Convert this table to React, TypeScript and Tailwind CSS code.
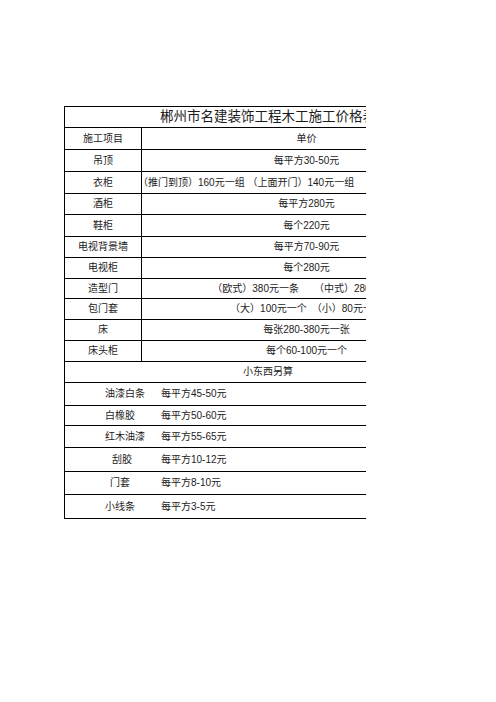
import React from "react";

const font = { fontFamily: '"Liberation Sans", "Noto Sans CJK SC", sans-serif' };

type Row = { name: string; price: string; h: string; left?: boolean };

const rows: Row[] = [
  { name: "吊顶", price: "每平方30-50元", h: "h-[22px]" },
  { name: "衣柜", price: "（推门到顶）160元一组 （上面开门）140元一组", h: "h-[22px]", left: true },
  { name: "酒柜", price: "每平方280元", h: "h-[21px]" },
  { name: "鞋柜", price: "每个220元", h: "h-[22px]" },
  { name: "电视背景墙", price: "每平方70-90元", h: "h-[21px]" },
  { name: "电视柜", price: "每个280元", h: "h-[21px]" },
  { name: "造型门", price: "（欧式）380元一条　　（中式）280元一条", h: "h-[20px]" },
  { name: "包门套", price: "（大）100元一个　（小）80元一个", h: "h-[21px]" },
  { name: "床", price: "每张280-380元一张", h: "h-[21px]" },
  { name: "床头柜", price: "每个60-100元一个", h: "h-[21px]" },
];

type Small = { name: string; price: string; h: string; pl: string };

const smalls: Small[] = [
  { name: "油漆白条", price: "每平方45-50元", h: "h-[23px]", pl: "pl-[40px]" },
  { name: "白橡胶", price: "每平方50-60元", h: "h-[20px]", pl: "pl-[40px]" },
  { name: "红木油漆", price: "每平方55-65元", h: "h-[22px]", pl: "pl-[40px]" },
  { name: "刮胶", price: "每平方10-12元", h: "h-[24px]", pl: "pl-[47px]" },
  { name: "门套", price: "每平方8-10元", h: "h-[23px]", pl: "pl-[45px]" },
  { name: "小线条", price: "每平方3-5元", h: "h-[24px]", pl: "pl-[40px]" },
];

export default function App() {
  return (
    <div className="w-[496px] h-[702px] bg-white pt-[106px] text-[#1c1c1c]" style={font}>
      <div className="ml-[64px] w-[302px] overflow-hidden">
        <div className="w-[407px] border-l border-t border-black text-[10px] leading-none">
          <div className="h-[21px] border-b border-black flex items-center justify-center text-[13.5px] whitespace-nowrap">
            郴州市名建装饰工程木工施工价格表
          </div>
          <div className="h-[22px] border-b border-black flex">
            <div className="w-[77px] shrink-0 border-r border-black flex items-center justify-center">施工项目</div>
            <div className="flex-1 flex items-center justify-center">单价</div>
          </div>
          {rows.map((r) => (
            <div key={r.name} className={`${r.h} border-b border-black flex`}>
              <div className="w-[77px] shrink-0 border-r border-black flex items-center justify-center whitespace-nowrap">
                {r.name}
              </div>
              <div
                className={`flex-1 flex items-center whitespace-nowrap ${r.left ? "justify-start -ml-[4px]" : "justify-center"}`}
              >
                {r.price}
              </div>
            </div>
          ))}
          <div className="h-[21px] border-b border-black flex items-center justify-center">小东西另算</div>
          {smalls.map((s) => (
            <div key={s.name} className={`${s.h} border-b border-black flex items-center`}>
              <div className={`w-[96px] shrink-0 whitespace-nowrap ${s.pl}`}>{s.name}</div>
              <div className="whitespace-nowrap">{s.price}</div>
            </div>
          ))}
        </div>
      </div>
    </div>
  );
}
